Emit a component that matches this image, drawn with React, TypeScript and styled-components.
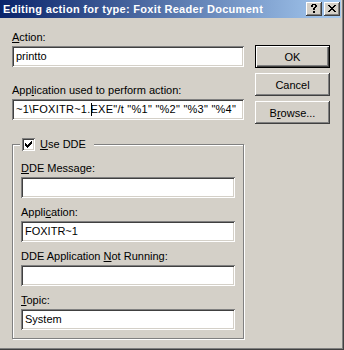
import styled, { createGlobalStyle } from "styled-components";

const CHECK = [
	"......X",
	".....XX",
	"X...XXX",
	"XX.XXX.",
	"XXXXX..",
	".XXX...",
	"..X....",
];

const CLOSE = [
	"XX....XX",
	".XX..XX.",
	"..XXXX..",
	"...XX...",
	"..XXXX..",
	".XX..XX.",
	"XX....XX",
];

const HELP = [
	".XXXX.",
	"XX..XX",
	"XX..XX",
	"...XX.",
	"..XX..",
	"..XX..",
	"......",
	"..XX..",
	"..XX..",
];

function Glyph({ rows }: { rows: string[] }) {
	const w = rows[0].length;
	const h = rows.length;
	let d = "";
	rows.forEach((row, y) => {
		row.split("").forEach((c, x) => {
			if (c === "X") d += `M${x} ${y}h1v1h-1z`;
		});
	});
	return (
		<svg width={w} height={h} viewBox={`0 0 ${w} ${h}`} shapeRendering="crispEdges">
			<path d={d} fill="#000" />
		</svg>
	);
}

function App() {
	return (
		<>
			<GlobalStyle />
			<Window>
				<TitleBar>
					<Title>Editing action for type: Foxit Reader Document</Title>
					<TitleButton $glyph="help">
						<Glyph rows={HELP} />
					</TitleButton>
					<TitleButton $glyph="close">
						<Glyph rows={CLOSE} />
					</TitleButton>
				</TitleBar>

				<Body>
					<Left>
						<Label>
							<u>A</u>ction:
						</Label>
						<Edit>printto</Edit>

						<Label $gap={17}>
							App<u>l</u>ication used to perform action:
						</Label>
						<Edit $spacing={0.25}>
							~1\FOXITR~1.<Caret />EXE"/t "%1" "%2" "%3" "%4"
						</Edit>

						<Group>
							<Legend>
								<CheckBox>
									<Glyph rows={CHECK} />
								</CheckBox>
								<span>
									<u>U</u>se DDE
								</span>
							</Legend>

							<Label>
								<u>D</u>DE Message:
							</Label>
							<Edit />

							<Label $gap={8}>
								Appli<u>c</u>ation:
							</Label>
							<Edit>FOXITR~1</Edit>

							<Label $gap={8}>
								DDE Application <u>N</u>ot Running:
							</Label>
							<Edit />

							<Label $gap={8}>
								<u>T</u>opic:
							</Label>
							<Edit>System</Edit>
						</Group>
					</Left>

					<Buttons>
						<Button $default>OK</Button>
						<Button>Cancel</Button>
						<Button>
							B<u>r</u>owse...
						</Button>
					</Buttons>
				</Body>
			</Window>
		</>
	);
}

export default App;

const GlobalStyle = createGlobalStyle`
	html, body {
		margin: 0;
		padding: 0;
		background: #d4d0c8;
	}
	body {
		font-family: "Liberation Sans", Arial, sans-serif;
		font-size: 11px;
		color: #000;
	}
`;

const Window = styled("div")({
	width: "344px",
	height: "350px",
	boxSizing: "border-box",
	padding: "0 3px 2px 0",
	backgroundColor: "#d4d0c8",
	boxShadow: "inset -1px -1px #404040, inset -2px -2px #808080",
});

const TitleBar = styled("div")({
	height: "18px",
	display: "flex",
	alignItems: "center",
	gap: "2px",
	padding: "0 1px 0 3px",
	background: "linear-gradient(to right, #0a246a, #a6caf0)",
});

const Title = styled("div")({
	flex: 1,
	color: "#fff",
	fontWeight: "bold",
	fontSize: "11px",
	lineHeight: "18px",
	letterSpacing: "0.3px",
	whiteSpace: "nowrap",
});

const TitleButton = styled("div")<{ $glyph: "help" | "close" }>((p) => ({
	width: "16px",
	height: "14px",
	boxSizing: "border-box",
	display: "flex",
	alignItems: "flex-start",
	padding: p.$glyph === "help" ? "2px 0 0 5px" : "3px 0 0 4px",
	backgroundColor: "#d4d0c8",
	boxShadow:
		"inset -1px -1px #404040, inset 1px 1px #fff, inset -2px -2px #808080, inset 2px 2px #d4d0c8",
	svg: { display: "block" },
}));

const Body = styled("div")({
	display: "flex",
	padding: "13px 0 0 12px",
});

const Left = styled("div")({
	width: "232px",
	display: "flex",
	flexDirection: "column",
});

const Label = styled("div")<{ $gap?: number }>((p) => ({
	height: "13px",
	lineHeight: "13px",
	marginTop: `${p.$gap ?? 0}px`,
	whiteSpace: "nowrap",
}));

const Edit = styled("div")<{ $spacing?: number }>((p) => ({
	marginTop: "2px",
	height: "21px",
	boxSizing: "border-box",
	padding: "0 3px 0 4px",
	lineHeight: "21px",
	letterSpacing: `${p.$spacing ?? 0}px`,
	backgroundColor: "#fff",
	whiteSpace: "nowrap",
	overflow: "hidden",
	boxShadow:
		"inset 1px 1px #808080, inset -1px -1px #fff, inset 2px 2px #404040, inset -2px -2px #d4d0c8",
}));

const Caret = styled("span")({
	display: "inline-block",
	width: "1px",
	height: "13px",
	marginRight: "-1px",
	verticalAlign: "-3px",
	backgroundColor: "#000",
});

const Group = styled("fieldset")({
	margin: "18px 0 0 0",
	padding: "11px 8px 8px 8px",
	minWidth: 0,
	border: "1px solid #808080",
	boxShadow: "inset 1px 1px #fff, 1px 1px #fff",
	display: "flex",
	flexDirection: "column",
});

const Legend = styled("legend")({
	marginLeft: "-1px",
	padding: "0 8px 0 2px",
	height: "13px",
	display: "flex",
	alignItems: "center",
	gap: "5px",
	lineHeight: "13px",
	backgroundColor: "#d4d0c8",
});

const CheckBox = styled("div")({
	width: "13px",
	height: "13px",
	boxSizing: "border-box",
	padding: "3px",
	backgroundColor: "#fff",
	boxShadow:
		"inset 1px 1px #808080, inset -1px -1px #fff, inset 2px 2px #404040, inset -2px -2px #d4d0c8",
	svg: { display: "block" },
});

const Buttons = styled("div")({
	display: "flex",
	flexDirection: "column",
	gap: "5px",
	marginLeft: "11px",
	marginTop: "14px",
});

const Button = styled("div")<{ $default?: boolean }>((p) => ({
	width: "75px",
	height: "23px",
	boxSizing: "border-box",
	display: "flex",
	alignItems: "center",
	justifyContent: "center",
	backgroundColor: "#d4d0c8",
	border: p.$default ? "1px solid #000" : "none",
	boxShadow: p.$default
		? "inset 1px 1px #fff, inset -1px -1px #404040, inset -2px -2px #808080"
		: "inset -1px -1px #404040, inset 1px 1px #fff, inset -2px -2px #808080, inset 2px 2px #d4d0c8",
}));
